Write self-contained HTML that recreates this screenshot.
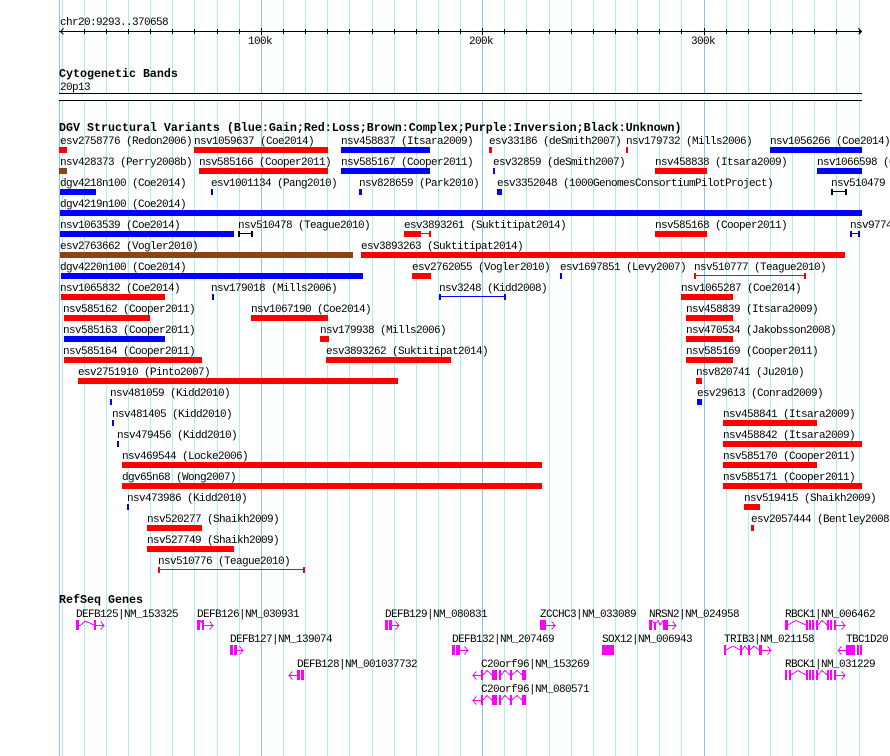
<!DOCTYPE html>
<html><head><meta charset="utf-8"><title>GBrowse</title>
<style>
html,body{margin:0;padding:0;background:#fff;overflow:hidden}
svg{display:block;position:absolute;left:0;top:0}
text{font-family:"Liberation Mono",monospace;font-size:11px;letter-spacing:-.6px;fill:#000;white-space:pre}
.t{font-weight:bold;font-size:11.67px;letter-spacing:0}
.r{fill:#f00}.b{fill:#00f}.n{fill:#8b4513}.k{fill:#000}.m{fill:#f0f}
.g line{stroke:#afeeee}.g .j{stroke:#8cc4e8}
.i{fill:none;stroke:#f0f;stroke-width:1}
</style></head><body>
<svg width="890" height="756" viewBox="0 0 890 756" shape-rendering="crispEdges">
<g class="g">
<line class="j" x1="59.5" x2="59.5" y1="0" y2="756"/>
<line x1="62.5" x2="62.5" y1="0" y2="756"/><line x1="84.5" x2="84.5" y1="0" y2="756"/><line x1="106.5" x2="106.5" y1="0" y2="756"/><line x1="128.5" x2="128.5" y1="0" y2="756"/><line x1="150.5" x2="150.5" y1="0" y2="756"/><line x1="172.5" x2="172.5" y1="0" y2="756"/><line x1="194.5" x2="194.5" y1="0" y2="756"/><line x1="217.5" x2="217.5" y1="0" y2="756"/><line x1="239.5" x2="239.5" y1="0" y2="756"/>
<line class="j" x1="261.5" x2="261.5" y1="0" y2="756"/>
<line x1="283.5" x2="283.5" y1="0" y2="756"/><line x1="305.5" x2="305.5" y1="0" y2="756"/><line x1="327.5" x2="327.5" y1="0" y2="756"/><line x1="349.5" x2="349.5" y1="0" y2="756"/><line x1="372.5" x2="372.5" y1="0" y2="756"/><line x1="394.5" x2="394.5" y1="0" y2="756"/><line x1="416.5" x2="416.5" y1="0" y2="756"/><line x1="438.5" x2="438.5" y1="0" y2="756"/><line x1="460.5" x2="460.5" y1="0" y2="756"/>
<line class="j" x1="482.5" x2="482.5" y1="0" y2="756"/>
<line x1="504.5" x2="504.5" y1="0" y2="756"/><line x1="526.5" x2="526.5" y1="0" y2="756"/><line x1="549.5" x2="549.5" y1="0" y2="756"/><line x1="571.5" x2="571.5" y1="0" y2="756"/><line x1="593.5" x2="593.5" y1="0" y2="756"/><line x1="615.5" x2="615.5" y1="0" y2="756"/><line x1="637.5" x2="637.5" y1="0" y2="756"/><line x1="659.5" x2="659.5" y1="0" y2="756"/><line x1="681.5" x2="681.5" y1="0" y2="756"/>
<line class="j" x1="704.5" x2="704.5" y1="0" y2="756"/>
<line x1="726.5" x2="726.5" y1="0" y2="756"/><line x1="748.5" x2="748.5" y1="0" y2="756"/><line x1="770.5" x2="770.5" y1="0" y2="756"/><line x1="792.5" x2="792.5" y1="0" y2="756"/><line x1="814.5" x2="814.5" y1="0" y2="756"/><line x1="836.5" x2="836.5" y1="0" y2="756"/><line x1="859.5" x2="859.5" y1="0" y2="756"/>
</g>

<!-- ruler -->
<rect class="k" x="59" y="31" width="803" height="1"/>
<path d="M60.5 31.5L63.5 28.5M60.5 31.5L63.5 34.5M861.5 31.5L858.5 28.5M861.5 31.5L858.5 34.5" fill="none" stroke="#000"/>
<path d="M84.5 29V34M106.5 29V34M128.5 29V34M150.5 29V34M172.5 29V34M194.5 29V34M217.5 29V34M239.5 29V34M261.5 28V35M283.5 29V34M305.5 29V34M327.5 29V34M349.5 29V34M372.5 29V34M394.5 29V34M416.5 29V34M438.5 29V34M460.5 29V34M482.5 28V35M504.5 29V34M526.5 29V34M549.5 29V34M571.5 29V34M593.5 29V34M615.5 29V34M637.5 29V34M659.5 29V34M681.5 29V34M704.5 28V35M726.5 29V34M748.5 29V34M770.5 29V34M792.5 29V34M814.5 29V34M836.5 29V34M859.5 29V34" fill="none" stroke="#000"/>
<text x="60" y="25">chr20:9293..370658</text>
<text x="248" y="44">100k</text><text x="469" y="44">200k</text><text x="691" y="44">300k</text>

<!-- bands -->
<text class="t" x="59" y="77">Cytogenetic Bands</text>
<text x="60" y="90">20p13</text>
<rect x="59" y="93" width="803" height="8" fill="#fff"/>
<rect class="k" x="59" y="93" width="803" height="1"/>
<rect class="k" x="59" y="100" width="803" height="1"/>

<text class="t" x="59" y="131">DGV Structural Variants (Blue:Gain;Red:Loss;Brown:Complex;Purple:Inversion;Black:Unknown)</text>

<!-- row 0 -->
<text x="60" y="144">esv2758776 (Redon2006)</text><rect class="r" x="59" y="147" width="8" height="6"/>
<text x="194" y="144">nsv1059637 (Coe2014)</text><rect class="r" x="194" y="147" width="134" height="6"/>
<text x="341" y="144">nsv458837 (Itsara2009)</text><rect class="b" x="341" y="147" width="89" height="6"/>
<text x="489" y="144">esv33186 (deSmith2007)</text><rect class="r" x="489" y="147" width="3" height="6"/>
<text x="626" y="144">nsv179732 (Mills2006)</text><rect class="r" x="626" y="147" width="2" height="6"/>
<text x="770" y="144">nsv1056266 (Coe2014)</text><rect class="b" x="770" y="147" width="92" height="6"/>
<!-- row 1 -->
<text x="60" y="165">nsv428373 (Perry2008b)</text><rect class="n" x="59" y="168" width="8" height="6"/>
<text x="199" y="165">nsv585166 (Cooper2011)</text><rect class="r" x="199" y="168" width="129" height="6"/>
<text x="341" y="165">nsv585167 (Cooper2011)</text><rect class="b" x="341" y="168" width="89" height="6"/>
<text x="493" y="165">esv32859 (deSmith2007)</text><rect class="b" x="493" y="168" width="2" height="6"/>
<text x="655" y="165">nsv458838 (Itsara2009)</text><rect class="r" x="655" y="168" width="52" height="6"/>
<text x="817" y="165">nsv1066598 (Coe2014)</text><rect class="b" x="817" y="168" width="45" height="6"/>
<!-- row 2 -->
<text x="60" y="186">dgv4218n100 (Coe2014)</text><rect class="b" x="60" y="189" width="36" height="6"/>
<text x="211" y="186">esv1001134 (Pang2010)</text><rect class="b" x="211" y="189" width="2" height="6"/>
<text x="359" y="186">nsv828659 (Park2010)</text><rect class="b" x="359" y="189" width="3" height="6"/>
<text x="497" y="186">esv3352048 (1000GenomesConsortiumPilotProject)</text><rect class="b" x="497" y="189" width="5" height="6"/>
<text x="831" y="186">nsv510479 (Teague2010)</text>
<rect class="k" x="831" y="189" width="2" height="6"/><rect class="k" x="845" y="189" width="2" height="6"/><rect class="k" x="831" y="191" width="16" height="1"/>
<!-- row 3 -->
<text x="60" y="207">dgv4219n100 (Coe2014)</text><rect class="b" x="60" y="210" width="802" height="6"/>
<!-- row 4 -->
<text x="60" y="228">nsv1063539 (Coe2014)</text><rect class="b" x="60" y="231" width="174" height="6"/>
<text x="238" y="228">nsv510478 (Teague2010)</text>
<rect class="k" x="238" y="231" width="2" height="6"/><rect class="k" x="251" y="231" width="2" height="6"/><rect class="k" x="238" y="233" width="15" height="1"/>
<text x="404" y="228">esv3893261 (Suktitipat2014)</text>
<rect class="r" x="404" y="231" width="17" height="6"/><rect class="r" x="421" y="233" width="10" height="1"/><rect class="r" x="429" y="231" width="2" height="6"/>
<text x="655" y="228">nsv585168 (Cooper2011)</text><rect class="r" x="655" y="231" width="52" height="6"/>
<text x="850" y="228">nsv977466</text>
<rect class="b" x="850" y="231" width="2" height="6"/><rect class="b" x="858" y="231" width="2" height="6"/><rect class="b" x="850" y="233" width="10" height="1"/>
<!-- row 5 -->
<text x="60" y="249">esv2763662 (Vogler2010)</text><rect class="n" x="60" y="252" width="293" height="6"/>
<text x="361" y="249">esv3893263 (Suktitipat2014)</text><rect class="r" x="361" y="252" width="484" height="6"/>
<!-- row 6 -->
<text x="60" y="270">dgv4220n100 (Coe2014)</text><rect class="b" x="61" y="273" width="302" height="6"/>
<text x="412" y="270">esv2762055 (Vogler2010)</text><rect class="r" x="412" y="273" width="19" height="6"/>
<text x="560" y="270">esv1697851 (Levy2007)</text><rect class="b" x="560" y="273" width="2" height="6"/>
<text x="694" y="270">nsv510777 (Teague2010)</text>
<rect class="r" x="694" y="273" width="2" height="6"/><rect class="r" x="804" y="273" width="2" height="6"/><rect class="r" x="694" y="275" width="112" height="1"/>
<!-- row 7 -->
<text x="60" y="291">nsv1065832 (Coe2014)</text><rect class="r" x="61" y="294" width="104" height="6"/>
<text x="211" y="291">nsv179018 (Mills2006)</text><rect class="b" x="212" y="294" width="2" height="6"/>
<text x="439" y="291">nsv3248 (Kidd2008)</text>
<rect class="b" x="439" y="294" width="2" height="6"/><rect class="b" x="504" y="294" width="2" height="6"/><rect class="b" x="439" y="296" width="67" height="1"/>
<text x="681" y="291">nsv1065287 (Coe2014)</text><rect class="r" x="681" y="294" width="52" height="6"/>
<!-- row 8 -->
<text x="63" y="312">nsv585162 (Cooper2011)</text><rect class="r" x="64" y="315" width="86" height="6"/>
<text x="251" y="312">nsv1067190 (Coe2014)</text><rect class="r" x="251" y="315" width="77" height="6"/>
<text x="686" y="312">nsv458839 (Itsara2009)</text><rect class="r" x="686" y="315" width="47" height="6"/>
<!-- row 9 -->
<text x="63" y="333">nsv585163 (Cooper2011)</text><rect class="b" x="64" y="336" width="101" height="6"/>
<text x="320" y="333">nsv179938 (Mills2006)</text><rect class="r" x="320" y="336" width="9" height="6"/>
<text x="686" y="333">nsv470534 (Jakobsson2008)</text><rect class="r" x="686" y="336" width="47" height="6"/>
<!-- row 10 -->
<text x="63" y="354">nsv585164 (Cooper2011)</text><rect class="r" x="64" y="357" width="138" height="6"/>
<text x="326" y="354">esv3893262 (Suktitipat2014)</text><rect class="r" x="326" y="357" width="125" height="6"/>
<text x="686" y="354">nsv585169 (Cooper2011)</text><rect class="r" x="686" y="357" width="47" height="6"/>
<!-- row 11 -->
<text x="78" y="375">esv2751910 (Pinto2007)</text><rect class="r" x="78" y="378" width="320" height="6"/>
<text x="696" y="375">nsv820741 (Ju2010)</text><rect class="r" x="696" y="378" width="6" height="6"/>
<!-- row 12 -->
<text x="110" y="396">nsv481059 (Kidd2010)</text><rect class="b" x="110" y="399" width="2" height="6"/>
<text x="697" y="396">esv29613 (Conrad2009)</text><rect class="b" x="697" y="399" width="5" height="6"/>
<!-- row 13 -->
<text x="112" y="417">nsv481405 (Kidd2010)</text><rect class="b" x="112" y="420" width="2" height="6"/>
<text x="723" y="417">nsv458841 (Itsara2009)</text><rect class="r" x="723" y="420" width="94" height="6"/>
<!-- row 14 -->
<text x="117" y="438">nsv479456 (Kidd2010)</text><rect class="b" x="117" y="441" width="2" height="6"/>
<text x="723" y="438">nsv458842 (Itsara2009)</text><rect class="r" x="723" y="441" width="139" height="6"/>
<!-- row 15 -->
<text x="122" y="459">nsv469544 (Locke2006)</text><rect class="r" x="122" y="462" width="420" height="6"/>
<text x="723" y="459">nsv585170 (Cooper2011)</text><rect class="r" x="723" y="462" width="94" height="6"/>
<!-- row 16 -->
<text x="122" y="480">dgv65n68 (Wong2007)</text><rect class="r" x="122" y="483" width="420" height="6"/>
<text x="723" y="480">nsv585171 (Cooper2011)</text><rect class="r" x="723" y="483" width="139" height="6"/>
<!-- row 17 -->
<text x="127" y="501">nsv473986 (Kidd2010)</text><rect class="b" x="127" y="504" width="2" height="6"/>
<text x="744" y="501">nsv519415 (Shaikh2009)</text><rect class="r" x="744" y="504" width="16" height="6"/>
<!-- row 18 -->
<text x="147" y="522">nsv520277 (Shaikh2009)</text><rect class="r" x="147" y="525" width="55" height="6"/>
<text x="751" y="522">esv2057444 (Bentley2008)</text><rect class="r" x="751" y="525" width="3" height="6"/>
<!-- row 19 -->
<text x="147" y="543">nsv527749 (Shaikh2009)</text><rect class="r" x="147" y="546" width="87" height="6"/>
<!-- row 20 -->
<text x="158" y="564">nsv510776 (Teague2010)</text>
<rect class="r" x="158" y="567" width="2" height="6"/><rect class="r" x="303" y="567" width="2" height="6"/><rect class="r" x="158" y="569" width="147" height="1"/>

<!-- genes -->
<text class="t" x="59" y="603">RefSeq Genes</text>

<text x="76" y="617">DEFB125|NM_153325</text>
<rect class="m" x="76" y="620" width="3" height="10"/><rect class="m" x="94" y="620" width="2" height="10"/><rect class="m" x="79" y="625" width="2" height="1"/><rect class="m" x="96" y="625" width="8" height="1"/>
<polyline class="i" points="81,625 85,621 94,625"/><polyline class="i" points="100.5,621.5 104,625.5 100.5,629.5"/>

<text x="197" y="617">DEFB126|NM_030931</text>
<rect class="m" x="197" y="620" width="3" height="10"/><rect class="m" x="202" y="620" width="2" height="10"/><rect class="m" x="204" y="625" width="9" height="1"/>
<polyline class="i" points="200,622 201,620.5 202,623"/><polyline class="i" points="209.5,621.5 213,625.5 209.5,629.5"/>

<text x="385" y="617">DEFB129|NM_080831</text>
<rect class="m" x="385" y="620" width="3" height="10"/><rect class="m" x="389" y="620" width="3" height="10"/><rect class="m" x="392" y="625" width="7" height="1"/>
<polyline class="i" points="395.5,621.5 399,625.5 395.5,629.5"/>

<text x="540" y="617">ZCCHC3|NM_033089</text>
<rect class="m" x="540" y="620" width="6" height="10"/><rect class="m" x="546" y="625" width="9" height="1"/>
<polyline class="i" points="551.5,621.5 555,625.5 551.5,629.5"/>

<text x="649" y="617">NRSN2|NM_024958</text>
<rect class="m" x="649" y="620" width="3" height="10"/><rect class="m" x="654" y="622" width="2" height="8"/><rect class="m" x="663" y="620" width="5" height="10"/><rect class="m" x="668" y="625" width="8" height="1"/>
<polyline class="i" points="652,620.5 654,623"/><polyline class="i" points="656,623 658,620.5 660,625 663,620.5"/><polyline class="i" points="672.5,621.5 676,625.5 672.5,629.5"/>

<text x="785" y="617">RBCK1|NM_006462</text>
<rect class="m" x="785" y="620" width="3" height="10"/><rect class="m" x="806" y="620" width="2" height="10"/><rect class="m" x="809" y="620" width="2" height="10"/><rect class="m" x="812" y="620" width="2" height="10"/><rect class="m" x="816" y="620" width="2" height="10"/><rect class="m" x="827" y="620" width="2" height="10"/><rect class="m" x="830" y="620" width="2" height="10"/><rect class="m" x="834" y="620" width="2" height="10"/><rect class="m" x="836" y="625" width="9" height="1"/>
<polyline class="i" points="788,625 796,620.5 806,625"/><polyline class="i" points="818,625 822,620.5 827,625"/><polyline class="i" points="841.5,621.5 845,625.5 841.5,629.5"/>

<text x="230" y="642">DEFB127|NM_139074</text>
<rect class="m" x="230" y="645" width="3" height="10"/><rect class="m" x="234" y="645" width="3" height="10"/><rect class="m" x="237" y="650" width="6" height="1"/>
<polyline class="i" points="239.5,646.5 243,650.5 239.5,654.5"/>

<text x="452" y="642">DEFB132|NM_207469</text>
<rect class="m" x="452" y="645" width="3" height="10"/><rect class="m" x="456" y="645" width="4" height="10"/><rect class="m" x="460" y="650" width="8" height="1"/>
<polyline class="i" points="464.5,646.5 468,650.5 464.5,654.5"/>

<text x="602" y="642">SOX12|NM_006943</text>
<rect class="m" x="602" y="645" width="12" height="10"/>

<text x="724" y="642">TRIB3|NM_021158</text>
<rect class="m" x="724" y="645" width="2" height="10"/><rect class="m" x="740" y="645" width="2" height="10"/><rect class="m" x="748" y="645" width="2" height="10"/><rect class="m" x="759" y="645" width="3" height="10"/><rect class="m" x="762" y="650" width="9" height="1"/>
<polyline class="i" points="726,650 733,646 740,650"/><polyline class="i" points="742,650 745,646 748,650"/><polyline class="i" points="750,650 754,646 759,650"/><polyline class="i" points="767.5,646.5 771,650.5 767.5,654.5"/>

<text x="846" y="642">TBC1D20</text>
<rect class="m" x="838" y="650" width="8" height="1"/><rect class="m" x="846" y="645" width="9" height="10"/><rect class="m" x="857" y="645" width="2" height="10"/><rect class="m" x="860" y="645" width="2" height="10"/>
<polyline class="i" points="841.5,646.5 838,650.5 841.5,654.5"/>

<text x="297" y="667">DEFB128|NM_001037732</text>
<rect class="m" x="289" y="675" width="8" height="1"/><rect class="m" x="297" y="670" width="3" height="10"/><rect class="m" x="301" y="670" width="3" height="10"/>
<polyline class="i" points="292.5,671.5 289,675.5 292.5,679.5"/>

<text x="481" y="667">C20orf96|NM_153269</text>
<rect class="m" x="473" y="675" width="8" height="1"/><rect class="m" x="481" y="670" width="2" height="10"/><rect class="m" x="492" y="670" width="5" height="10"/><rect class="m" x="499" y="670" width="2" height="10"/><rect class="m" x="510" y="670" width="2" height="10"/><rect class="m" x="522" y="670" width="4" height="10"/>
<polyline class="i" points="476.5,671.5 473,675.5 476.5,679.5"/><polyline class="i" points="483,675 487,670.5 492,675"/><polyline class="i" points="501,675 505,670.5 510,675"/><polyline class="i" points="512,675 517,670.5 522,675"/>

<text x="785" y="667">RBCK1|NM_031229</text>
<rect class="m" x="785" y="670" width="2" height="10"/><rect class="m" x="789" y="670" width="2" height="10"/><rect class="m" x="806" y="670" width="2" height="10"/><rect class="m" x="809" y="670" width="2" height="10"/><rect class="m" x="812" y="670" width="2" height="10"/><rect class="m" x="816" y="670" width="2" height="10"/><rect class="m" x="827" y="670" width="2" height="10"/><rect class="m" x="830" y="670" width="2" height="10"/><rect class="m" x="834" y="670" width="2" height="10"/><rect class="m" x="836" y="675" width="9" height="1"/>
<polyline class="i" points="791,675 798,670.5 806,675"/><polyline class="i" points="818,675 822,670.5 827,675"/><polyline class="i" points="841.5,671.5 845,675.5 841.5,679.5"/>

<text x="481" y="692">C20orf96|NM_080571</text>
<rect class="m" x="473" y="700" width="8" height="1"/><rect class="m" x="481" y="695" width="2" height="10"/><rect class="m" x="492" y="695" width="5" height="10"/><rect class="m" x="499" y="695" width="2" height="10"/><rect class="m" x="510" y="695" width="2" height="10"/><rect class="m" x="522" y="695" width="4" height="10"/>
<polyline class="i" points="476.5,696.5 473,700.5 476.5,704.5"/><polyline class="i" points="483,700 487,695.5 492,700"/><polyline class="i" points="501,700 505,695.5 510,700"/><polyline class="i" points="512,700 517,695.5 522,700"/>
</svg>
</body></html>
